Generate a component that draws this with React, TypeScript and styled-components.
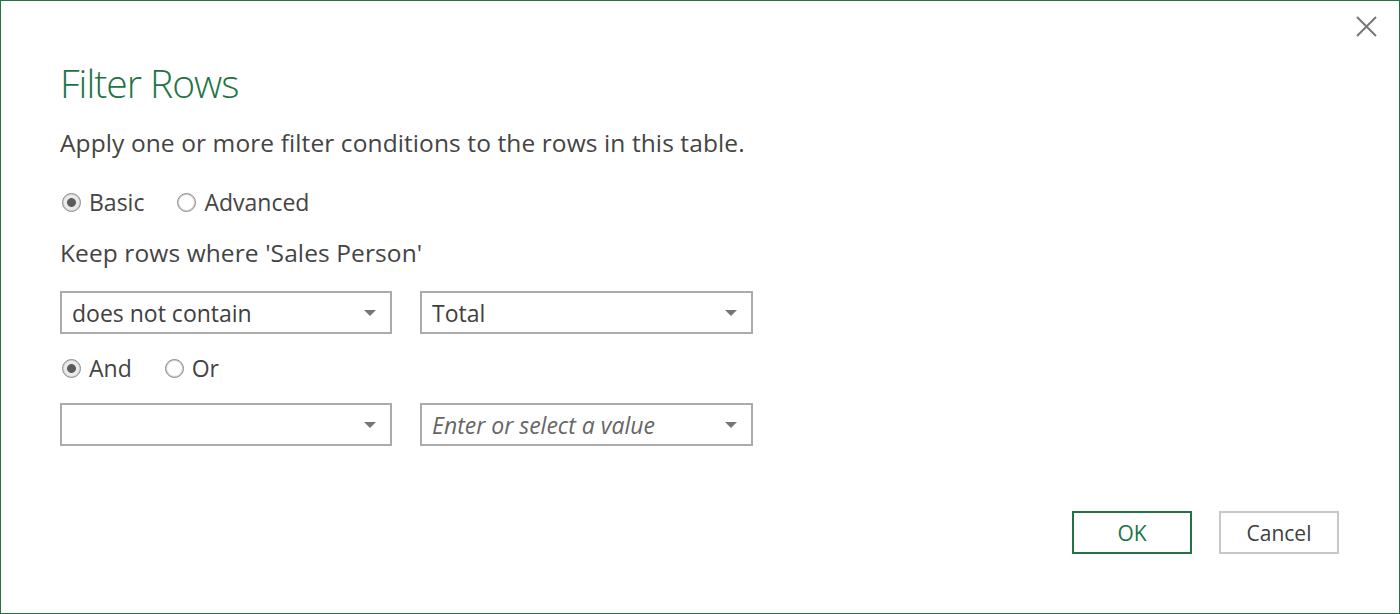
import * as React from "react";
import styled, { createGlobalStyle } from "styled-components";

const GlobalStyle = createGlobalStyle`
  html, body {
    margin: 0;
    padding: 0;
    background: #ffffff;
  }
  * {
    box-sizing: border-box;
  }
`;

const Dialog = styled.div`
  width: 1400px;
  height: 614px;
  border: 1px solid #217346;
  background: #ffffff;
  display: flex;
  flex-direction: column;
  font-family: "Open Sans", "Noto Sans", sans-serif;
  color: #444444;
  overflow: hidden;
`;

const TopBar = styled.div`
  display: flex;
  justify-content: flex-end;
  padding: 15px 22px 0 0;
`;

const CloseButton = styled.button`
  width: 21px;
  height: 21px;
  padding: 0;
  border: none;
  background: transparent;
  display: flex;
  cursor: pointer;
`;

const Body = styled.div`
  display: flex;
  flex-direction: column;
  padding-left: 59px;
`;

const Title = styled.h1`
  margin: 21px 0 0;
  height: 50px;
  font-size: 39px;
  line-height: 50px;
  font-weight: 300;
  letter-spacing: -1px;
  color: #217346;
`;

const Text = styled.div<{ $gap: number }>`
  margin-top: ${({ $gap }) => $gap}px;
  height: 30px;
  font-size: 24.5px;
  line-height: 30px;
  letter-spacing: 0.1px;
`;

const RadioRow = styled.div<{ $gap: number }>`
  margin-top: ${({ $gap }) => $gap}px;
  height: 30px;
  display: flex;
  align-items: center;
  gap: 33px;
  padding-left: 2px;
`;

const RadioOption = styled.label`
  display: flex;
  align-items: center;
  gap: 8px;
  font-size: 23px;
  line-height: 30px;
`;

const RadioCircle = styled.span<{ $checked: boolean }>`
  width: 19px;
  height: 19px;
  border-radius: 50%;
  border: 1px solid #8a8a8a;
  background: ${({ $checked }) =>
    $checked
      ? "radial-gradient(circle, #5c5c5c 0 4px, #e6e6e6 4.8px, #f6f6f6 70%, #dcdcdc 100%)"
      : "radial-gradient(circle, #ffffff 0 55%, #e2e2e2 100%)"};
  box-shadow: inset 0 0 0 1px #cfcfcf;
`;

const SelectRow = styled.div<{ $gap: number }>`
  margin-top: ${({ $gap }) => $gap}px;
  display: flex;
  gap: 28px;
`;

const Select = styled.div<{ $width: number }>`
  width: ${({ $width }) => $width}px;
  height: 43px;
  border: 2px solid #ababab;
  display: flex;
  align-items: center;
  justify-content: space-between;
  padding: 0 14px 0 10px;
  font-size: 23px;
`;

const SelectValue = styled.span<{ $placeholder?: boolean }>`
  font-style: ${({ $placeholder }) => ($placeholder ? "italic" : "normal")};
  color: ${({ $placeholder }) => ($placeholder ? "#666666" : "#404040")};
`;

const Caret = styled.span`
  width: 0;
  height: 0;
  border-left: 6px solid transparent;
  border-right: 6px solid transparent;
  border-top: 6px solid #767676;
`;

const Footer = styled.div`
  margin-top: 65px;
  display: flex;
  justify-content: flex-end;
  gap: 27px;
  padding-right: 60px;
`;

const ActionButton = styled.button<{ $primary?: boolean }>`
  width: 120px;
  height: 43px;
  background: #ffffff;
  border: 2px solid ${({ $primary }) => ($primary ? "#217346" : "#c8c8c8")};
  color: ${({ $primary }) => ($primary ? "#217346" : "#404040")};
  font-family: inherit;
  font-size: 21px;
  cursor: pointer;
`;

const Radio = ({ label, checked }: { label: string; checked?: boolean }) => (
  <RadioOption>
    <RadioCircle $checked={!!checked} />
    {label}
  </RadioOption>
);

const App = () => {
  return (
    <>
      <GlobalStyle />
      <Dialog>
        <TopBar>
          <CloseButton aria-label="Close">
            <svg width="21" height="21" viewBox="0 0 21 21">
              <path
                d="M1 1 L20 20 M20 1 L1 20"
                stroke="#767676"
                strokeWidth="2"
                fill="none"
              />
            </svg>
          </CloseButton>
        </TopBar>
        <Body>
          <Title>Filter Rows</Title>
          <Text $gap={20}>
            Apply one or more filter conditions to the rows in this table.
          </Text>
          <RadioRow $gap={29}>
            <Radio label="Basic" checked />
            <Radio label="Advanced" />
          </RadioRow>
          <Text $gap={21}>Keep rows where 'Sales Person'</Text>
          <SelectRow $gap={23}>
            <Select $width={332}>
              <SelectValue>does not contain</SelectValue>
              <Caret />
            </Select>
            <Select $width={333}>
              <SelectValue>Total</SelectValue>
              <Caret />
            </Select>
          </SelectRow>
          <RadioRow $gap={19}>
            <Radio label="And" checked />
            <Radio label="Or" />
          </RadioRow>
          <SelectRow $gap={20}>
            <Select $width={332}>
              <SelectValue />
              <Caret />
            </Select>
            <Select $width={333}>
              <SelectValue $placeholder>Enter or select a value</SelectValue>
              <Caret />
            </Select>
          </SelectRow>
        </Body>
        <Footer>
          <ActionButton $primary>OK</ActionButton>
          <ActionButton>Cancel</ActionButton>
        </Footer>
      </Dialog>
    </>
  );
};

export default App;
